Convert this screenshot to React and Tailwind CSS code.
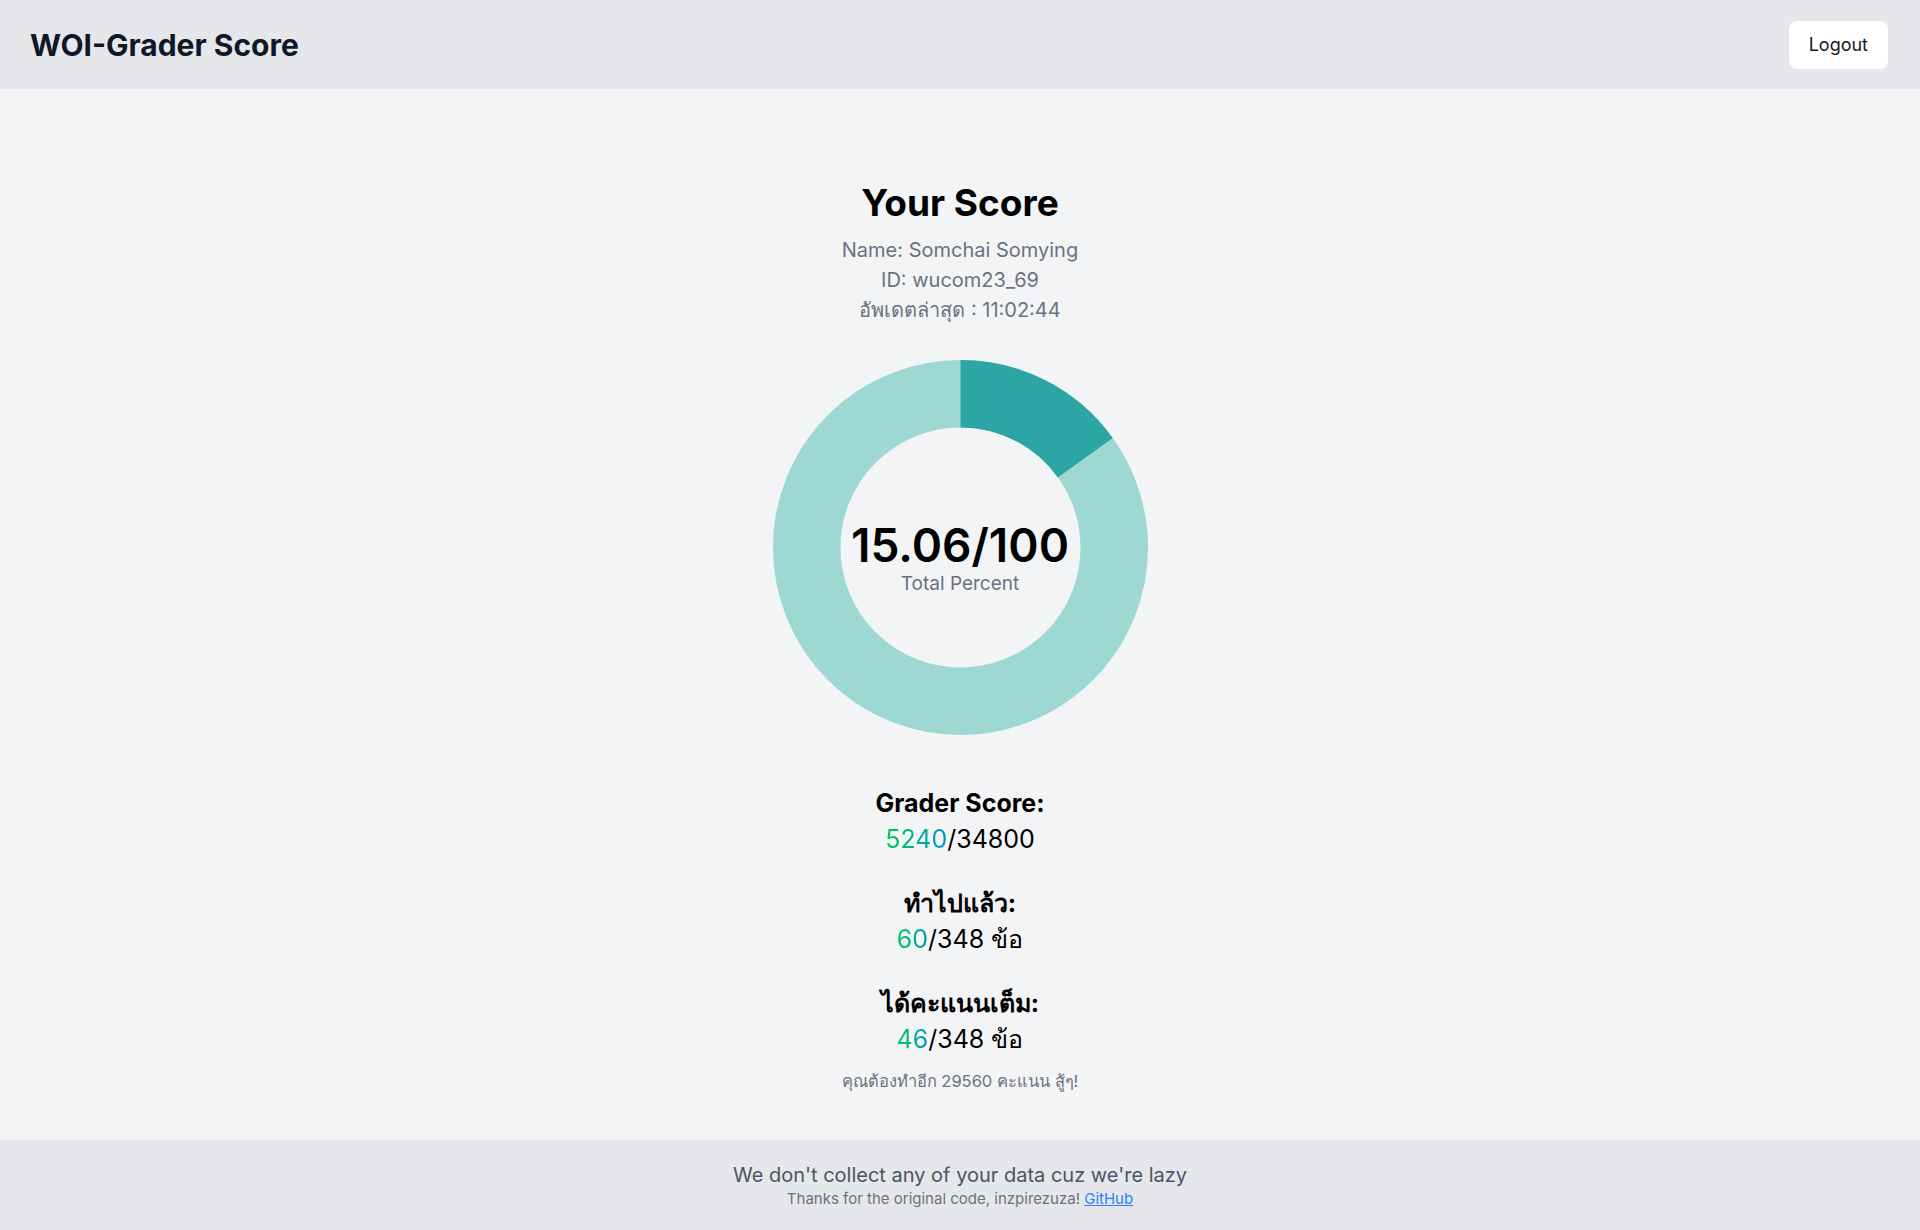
import React from 'react';

const font = { fontFamily: 'Inter, "Noto Sans", sans-serif' };

function Donut({ percent }) {
  const r = 153.75;
  const c = 2 * Math.PI * r;
  const filled = (percent / 100) * c;
  return (
    <div className="relative w-[375px] h-[375px]">
      <svg width="375" height="375" viewBox="0 0 375 375">
        <circle cx="187.5" cy="187.5" r={r} fill="none" stroke="#9ed8d3" strokeWidth="67.5" />
        <circle
          cx="187.5"
          cy="187.5"
          r={r}
          fill="none"
          stroke="#2ca6a4"
          strokeWidth="67.5"
          strokeDasharray={`${filled} ${c}`}
          transform="rotate(-90 187.5 187.5)"
        />
      </svg>
      <div className="absolute inset-0 flex flex-col items-center justify-center pt-[22px]">
        <div className="text-[46px] leading-[50px] font-semibold text-black">15.06/100</div>
        <div className="text-[19px] leading-7 text-gray-500">Total Percent</div>
      </div>
    </div>
  );
}

function Stat({ label, value, total, unit }) {
  return (
    <div className="flex flex-col items-center">
      <div className="text-[25px] leading-[33px] font-bold text-black">{label}</div>
      <div className="text-[25px] leading-[33px] mt-[3px] text-black">
        <span className="bg-gradient-to-r from-green-500 to-cyan-600 bg-clip-text text-transparent">{value}</span>
        /{total}
        {unit && ` ${unit}`}
      </div>
    </div>
  );
}

export default function App() {
  return (
    <div className="min-h-screen flex flex-col bg-gray-100" style={font}>
      <header className="h-[89px] bg-gray-200 flex items-center justify-between pl-[30px] pr-8">
        <h1 className="text-3xl font-bold text-gray-900">WOI-Grader Score</h1>
        <button className="bg-white rounded-lg px-5 h-12 text-lg text-gray-900">Logout</button>
      </header>

      <main className="flex-1 flex flex-col items-center pt-[94px] h-[1051px]">
        <h2 className="text-[37px] leading-10 font-bold text-black">Your Score</h2>
        <div className="mt-3 flex flex-col items-center text-xl leading-[30px] text-gray-500">
          <p>Name: Somchai Somying</p>
          <p>ID: wucom23_69</p>
          <p>อัพเดตล่าสุด : 11:02:44</p>
        </div>

        <div className="mt-[35px]">
          <Donut percent={15.06} />
        </div>

        <div className="mt-[52px] flex flex-col items-center gap-[31px]">
          <Stat label="Grader Score:" value="5240" total="34800" />
          <Stat label="ทำไปแล้ว:" value="60" total="348" unit="ข้อ" />
          <Stat label="ได้คะแนนเต็ม:" value="46" total="348" unit="ข้อ" />
        </div>
        <p className="mt-[13px] text-[16.5px] leading-6 text-gray-500">คุณต้องทำอีก 29560 คะแนน สู้ๆ!</p>
      </main>

      <footer className="h-[90px] bg-gray-200 flex flex-col items-center justify-center">
        <p className="text-xl leading-7 text-gray-600">We don't collect any of your data cuz we're lazy</p>
        <p className="text-[15px] leading-5 text-gray-500">
          Thanks for the original code, inzpirezuza!{' '}
          <a href="#" className="text-blue-500 underline">GitHub</a>
        </p>
      </footer>
    </div>
  );
}
